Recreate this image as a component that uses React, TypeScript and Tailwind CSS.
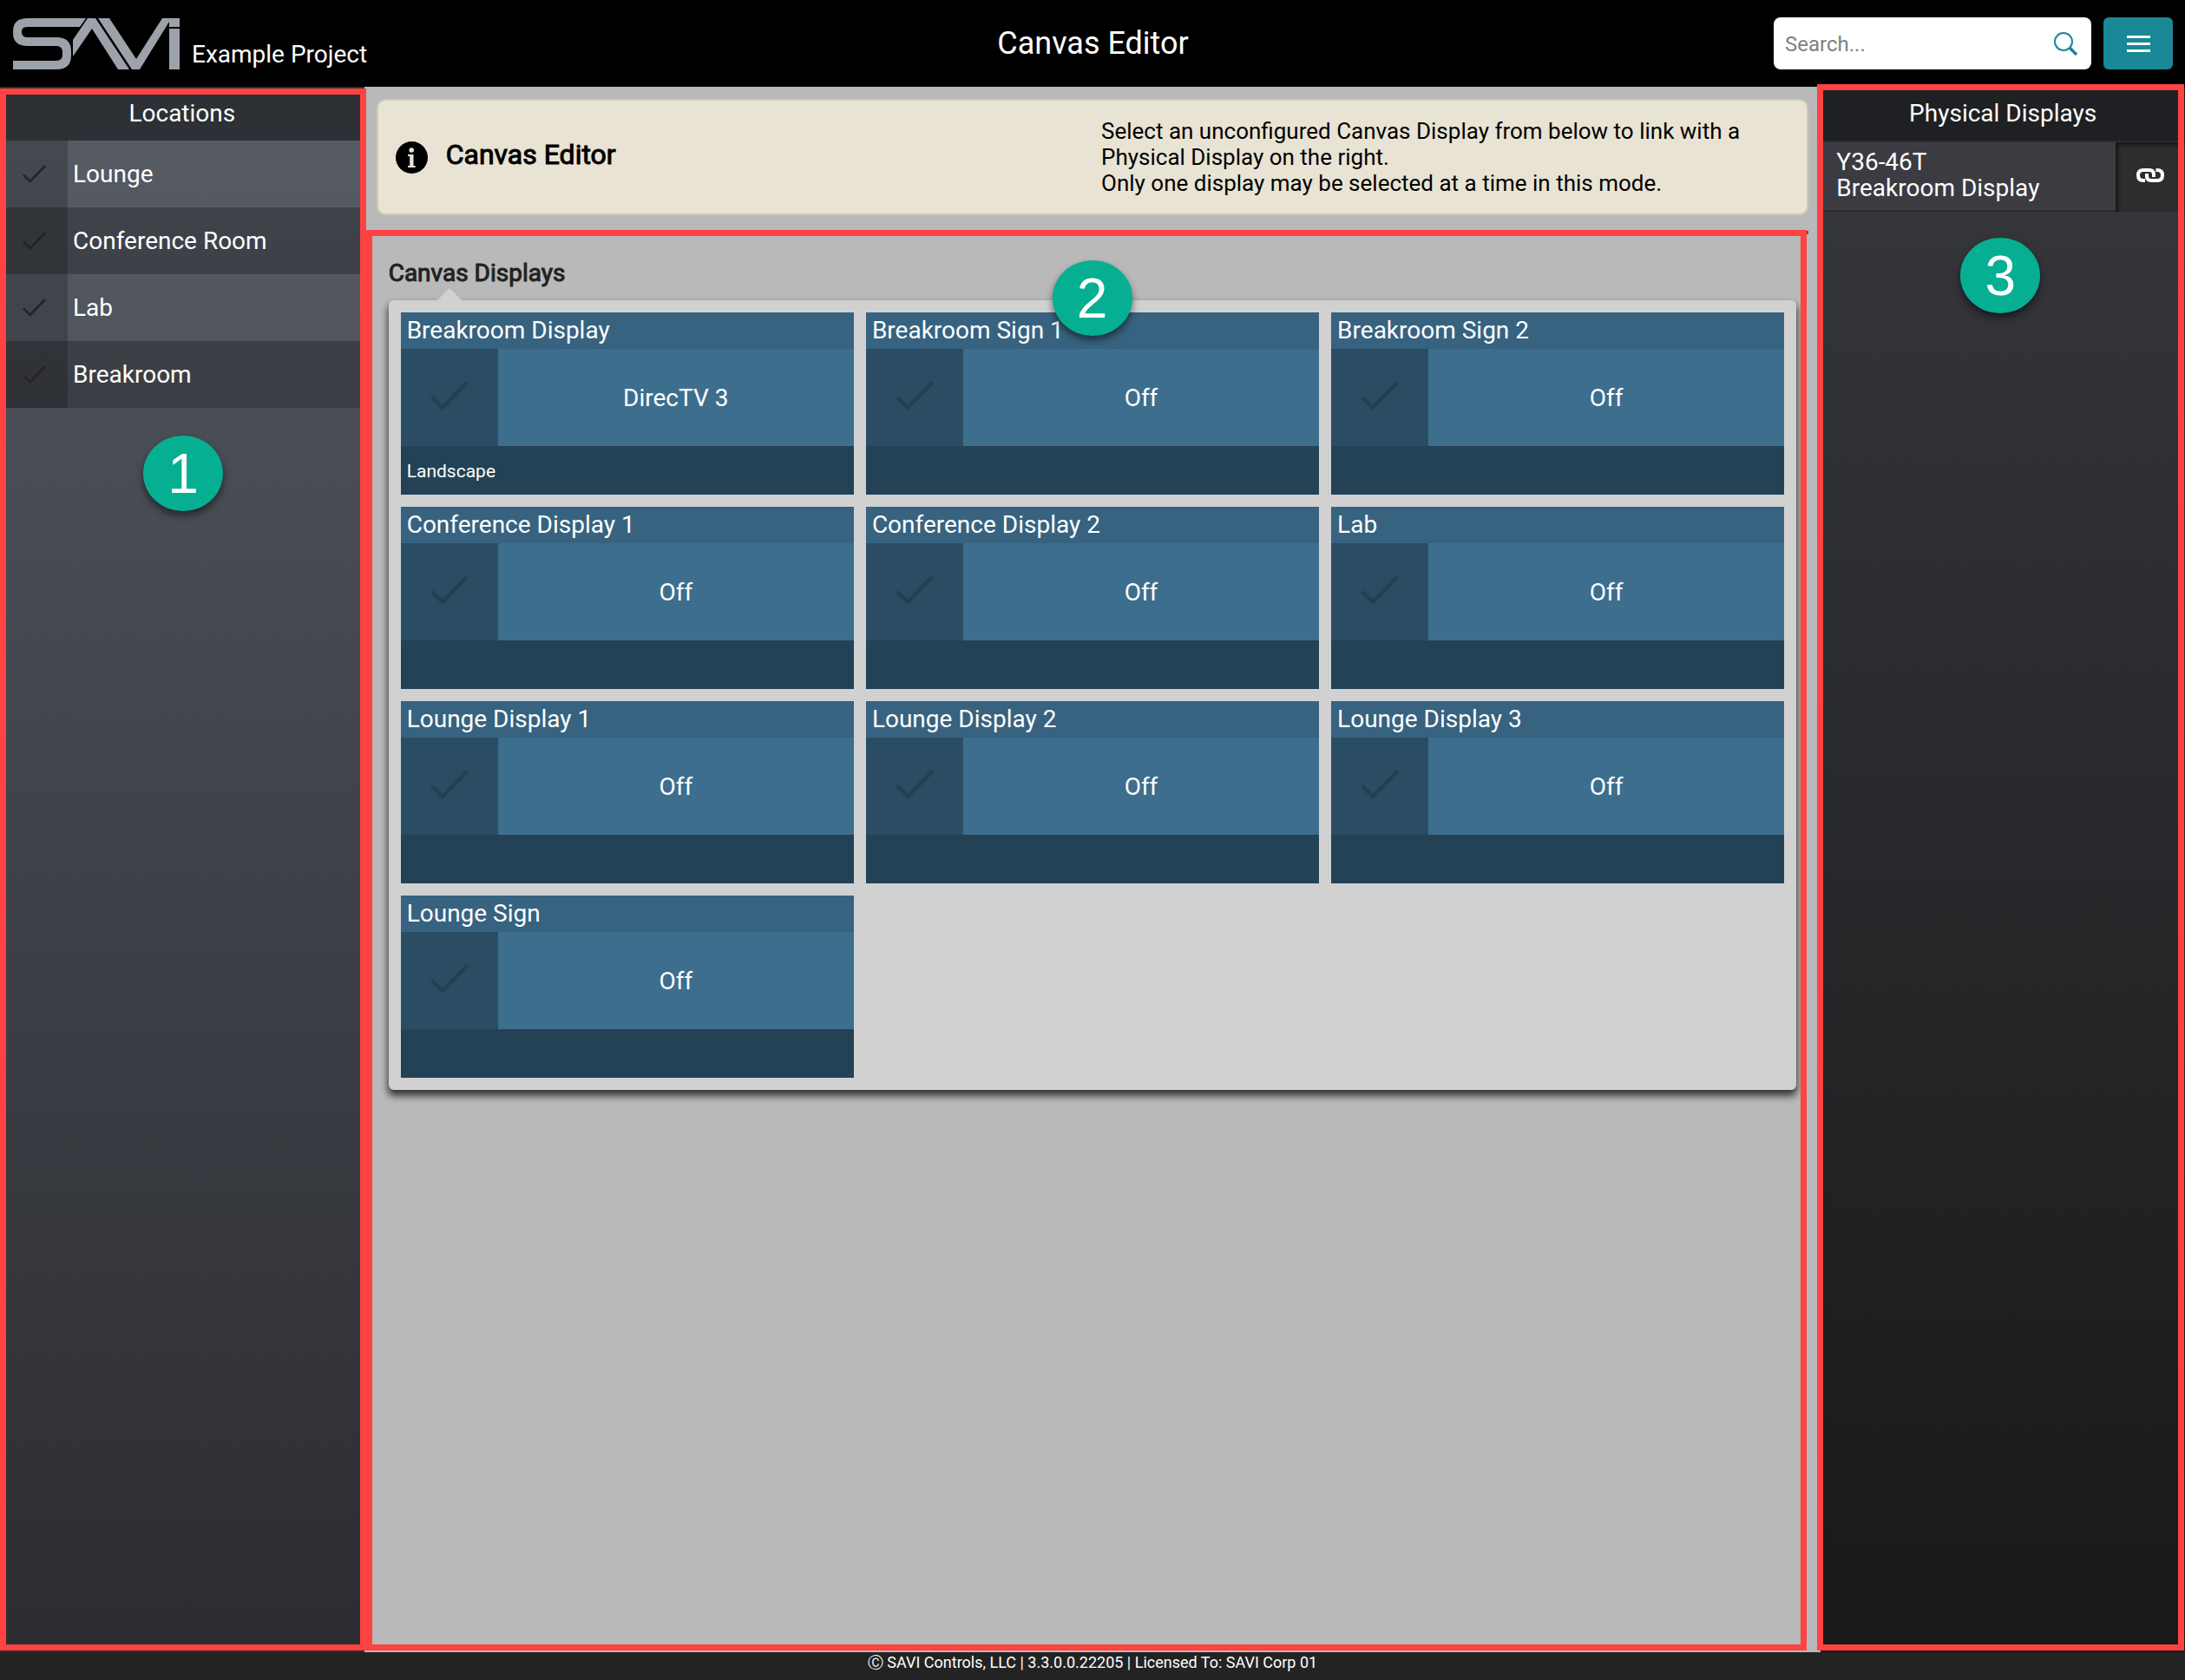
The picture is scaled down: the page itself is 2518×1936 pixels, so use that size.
import { useState } from "react";

const locations = ["Lounge", "Conference Room", "Lab", "Breakroom"];

const displays = [
  { name: "Breakroom Display", source: "DirecTV 3", note: "Landscape" },
  { name: "Breakroom Sign 1", source: "Off", note: "" },
  { name: "Breakroom Sign 2", source: "Off", note: "" },
  { name: "Conference Display 1", source: "Off", note: "" },
  { name: "Conference Display 2", source: "Off", note: "" },
  { name: "Lab", source: "Off", note: "" },
  { name: "Lounge Display 1", source: "Off", note: "" },
  { name: "Lounge Display 2", source: "Off", note: "" },
  { name: "Lounge Display 3", source: "Off", note: "" },
  { name: "Lounge Sign", source: "Off", note: "" },
];

function Logo() {
  return (
    <svg width="192" height="59" viewBox="0 0 192 59" role="img" aria-label="SAVI" fill="#9da1a9">
      <path d="M84 0H17Q0 0 0 15V17Q0 32 17 32H50Q57 32 57 39V42Q57 49 50 49H0V59H50Q67 59 67 43V38Q67 22 50 22H17Q10 22 10 16V15Q10 10 17 10H77Z" />
      <path d="M69 44V25L86 0H95L134 59H121L91 12Z" />
      <path d="M98 0H111L142 47L172 0H192V10H180V4L146 59H137Z" />
      <path d="M180 12H192V59H180Z" />
    </svg>
  );
}

function Check({ width, height, color }: { width: number; height: number; color: string }) {
  return (
    <svg width={width} height={height} viewBox="0 0 44 34" fill={color} aria-hidden="true">
      <path d="M3 17 14 27.800 41 0 44 3 14 34 0 20Z" />
    </svg>
  );
}

function Badge({ value, place }: { value: string; place: string }) {
  return (
    <span
      className={`absolute z-20 flex h-[87px] w-[92px] items-center justify-center rounded-[50%] bg-[#07af92] font-['Liberation_Sans',sans-serif] text-[64px] leading-none text-white shadow-[0_5px_8px_rgba(0,0,0,0.5)] ${place}`}
    >
      {value}
    </span>
  );
}

function Frame({ place }: { place: string }) {
  return <div aria-hidden="true" className={`pointer-events-none absolute z-10 border-[7px] border-[#ff4343] ${place}`} />;
}

export default function App() {
  const [query, setQuery] = useState("");
  return (
    <div className="flex min-h-screen flex-col bg-[#b9b9b9] font-['Roboto',sans-serif] text-[28px] leading-[30px] text-white">
      <header className="grid h-[100px] grid-cols-3 items-center bg-black pl-[15px] pr-[14px]">
        <div className="flex items-end gap-[14px]">
          <Logo />
          <span className="pb-[2px]">Example Project</span>
        </div>
        <h1 className="text-center text-[36px] leading-[40px]">Canvas Editor</h1>
        <div className="flex justify-end gap-[14px]">
          <label className="flex h-[60px] w-[366px] items-center rounded-lg bg-white pl-[13px] pr-[16px]">
            <input
              type="search"
              aria-label="Search"
              placeholder="Search..."
              value={query}
              onChange={(e) => setQuery(e.target.value)}
              className="min-w-0 flex-1 bg-transparent pt-[2px] text-[24px] text-black outline-none placeholder:text-[#808080]"
            />
            <svg width="28" height="28" viewBox="0 0 28 28" fill="none" stroke="#1a8896" aria-hidden="true">
              <circle cx="12" cy="12" r="10" strokeWidth="2" />
              <path d="M19 19 27 27" strokeWidth="3.500" />
            </svg>
          </label>
          <button type="button" aria-label="Menu" className="flex h-[60px] w-[80px] items-center justify-center rounded-md bg-[#1a8896]">
            <svg width="27" height="19" viewBox="0 0 27 19" fill="white" aria-hidden="true">
              <path d="M0 0h27v3H0zM0 8h27v3H0zM0 16h27v3H0z" />
            </svg>
          </button>
        </div>
      </header>

      <div className="flex flex-1">
        <aside className="relative w-1/6 bg-linear-to-b from-[#525760] to-[#2c2d32]">
          <Frame place="top-[2px] bottom-[2px] left-0 -right-[2px]" />
          <h2 className="h-[62px] bg-[#2d3035] pt-4 text-center">Locations</h2>
          <ul>
            {locations.map((name, i) => (
              <li key={name} className={i % 2 ? "bg-black/20" : "bg-white/3"}>
                <button type="button" className="flex h-[77px] w-full items-stretch text-left">
                  <span className="flex w-[78px] items-center justify-center bg-black/20">
                    <Check width={27} height={21} color="#242424" />
                  </span>
                  <span className="flex items-center pl-[6px]">{name}</span>
                </button>
              </li>
            ))}
          </ul>
          <Badge value="1" place="top-[402px] left-[165px]" />
        </aside>

        <main className="relative flex-1 px-[14px] pt-[14px]">
          <Frame place="top-[165px] bottom-[2px] left-[2px] right-[16px]" />
          <section className="flex h-[134px] items-center rounded-[10px] border-2 border-[#cfcab8] bg-[#e8e3d3] text-black">
            <div className="flex flex-1 items-center gap-[21px] pl-5">
              <svg width="37" height="37" viewBox="0 0 37 37" aria-hidden="true">
                <circle cx="18.500" cy="18.500" r="18.500" fill="black" />
                <circle cx="18.200" cy="10" r="2.800" fill="#e8e3d3" />
                <path d="M14 15H20.500V28H22.700V30H14V28H16.200V17H14Z" fill="#e8e3d3" />
              </svg>
              <h2 className="pb-[6px] text-[32px] leading-[36px] [-webkit-text-stroke:1px]">Canvas Editor</h2>
            </div>
            <p className="flex-1 pl-9 pr-9 text-[26px]">
              Select an unconfigured Canvas Display from below to link with a Physical Display on the right.
              <br />
              Only one display may be selected at a time in this mode.
            </p>
          </section>
          <hr className="mt-[18px] h-[4px] border-0 bg-[#555]" />

          <section className="px-[14px] pt-[30px]">
            <h2 className="text-[#222] [-webkit-text-stroke:1px]">Canvas Displays</h2>
            <div className="relative mt-4 grid grid-cols-3 gap-[14px] rounded-md bg-[#d1d1d1] p-[14px] shadow-[0_6px_8px_1px_rgba(0,0,0,0.7)]">
              <svg className="absolute -top-[14px] left-[56px]" width="28" height="14" viewBox="0 0 28 14" fill="#d1d1d1" aria-hidden="true">
                <path d="M14 0 28 14H0Z" />
              </svg>
              {displays.map((d) => (
                <article key={d.name} className="bg-[#244256]">
                  <h3 className="h-[42px] bg-[#376380] pl-[7px] pt-[6px]">{d.name}</h3>
                  <div className="flex h-[112px]">
                    <button type="button" aria-label={`Select ${d.name}`} className="flex w-[112px] items-center justify-center bg-[#2a4d63] pb-1">
                      <Check width={44} height={34} color="#253f50" />
                    </button>
                    <button type="button" className="flex-1 bg-[#3d6e8e] pt-[2px]">{d.source}</button>
                  </div>
                  <p className="flex h-[56px] items-center pl-[7px] pt-[2px] text-[21px]">{d.note}</p>
                </article>
              ))}
            </div>
          </section>
          <Badge value="2" place="top-[200px] left-[793px]" />
        </main>

        <aside className="relative w-1/6 bg-linear-to-b from-[#36383d] to-[#191919]">
          <Frame place="-top-[3px] bottom-[2px] -left-[4px] right-[1px]" />
          <h2 className="h-[62px] bg-[#1f2023] pt-4 text-center">Physical Displays</h2>
          <div className="flex h-[82px] border-y-2 border-[#2b2c2e] bg-[#3b3b41]">
            <p className="flex-1 pl-[18px] pt-2">
              Y36-46T
              <br />
              Breakroom Display
            </p>
            <button type="button" aria-label="Link display" className="-mb-[2px] flex w-[80px] items-center justify-center bg-[#2d2d2d] pb-1 shadow-[inset_3px_3px_4px_rgba(0,0,0,0.5)]">
              <svg width="32" height="16" viewBox="0 0 32 16" fill="none" stroke="white" strokeWidth="4" aria-hidden="true">
                <path d="M10 14H8Q2 14 2 8T8 2H15Q20 2 20 7V10" />
                <path d="M22.500 2H24Q30 2 30 8T24 14H17Q12 14 12 9V6" />
              </svg>
            </button>
          </div>
          <Badge value="3" place="top-[174px] left-[161px]" />
        </aside>
      </div>

      <footer className="h-[32px] bg-[#232323] text-center text-[18px] leading-[24px]">
        Ⓒ SAVI Controls, LLC | 3.3.0.0.22205 | Licensed To: SAVI Corp 01
      </footer>
    </div>
  );
}
